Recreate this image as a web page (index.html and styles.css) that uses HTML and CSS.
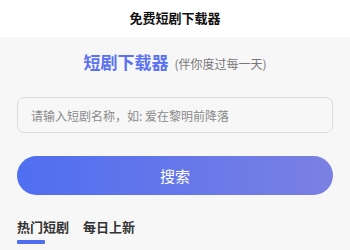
FILE: index.html
```html
<!DOCTYPE html>
<html>
<head>
    <title>免费短剧下载器</title>
    <link rel="stylesheet" href="styles.css">
</head>
<body>
    <div class="navbar">免费短剧下载器</div>

    <div class="main">
        <div class="brand">
            <span class="brand-name">短剧下载器</span>
            <span class="brand-sub">(伴你度过每一天)</span>
        </div>

        <input type="text" class="search-input" placeholder="请输入短剧名称，如: 爱在黎明前降落">

        <button class="search-btn">搜索</button>

        <div class="tabs">
            <div class="tab active">热门短剧</div>
            <div class="tab">每日上新</div>
        </div>
    </div>
</body>
</html>
```

FILE: styles.css
```css
body {
    margin: 0;
    font-family: "Noto Sans CJK SC", "Noto Sans", sans-serif;
    background-color: #f7f7f7;
}
.navbar {
    height: 37px;
    line-height: 36px;
    background-color: #fff;
    text-align: center;
    font-size: 13px;
    font-weight: bold;
    color: #111;
}
.main {
    padding: 0 17px;
}
.brand {
    display: flex;
    justify-content: center;
    align-items: baseline;
    gap: 6px;
    padding-top: 13px;
    height: 38px;
    box-sizing: border-box;
    margin-bottom: 22px;
}
.brand-name {
    font-size: 17px;
    font-weight: bold;
    color: #5b72f2;
    line-height: 24px;
}
.brand-sub {
    font-size: 12px;
    color: #777;
}
.search-input {
    display: block;
    width: 100%;
    box-sizing: border-box;
    height: 36px;
    padding: 0 13px;
    border: 1px solid #dcdcdc;
    border-radius: 7px;
    background-color: #f7f7f7;
    font-family: inherit;
    font-size: 12px;
    color: #333;
    outline: none;
}
.search-input::placeholder {
    color: #8a8a8a;
}
.search-btn {
    display: block;
    width: 100%;
    height: 39px;
    margin-top: 23px;
    border: none;
    border-radius: 20px;
    background: linear-gradient(90deg, #4f6ef1, #7b80e3);
    color: #fff;
    font-family: inherit;
    font-size: 15px;
}
.tabs {
    display: flex;
    align-items: flex-start;
    gap: 14px;
    margin-top: 22px;
}
.tab {
    font-size: 13px;
    font-weight: bold;
    color: #333;
    line-height: 20px;
}
.tab.active::after {
    content: "";
    display: block;
    margin-top: 3px;
    width: 28px;
    height: 4px;
    border-radius: 1px;
    background-color: #4f6ef1;
}
```
